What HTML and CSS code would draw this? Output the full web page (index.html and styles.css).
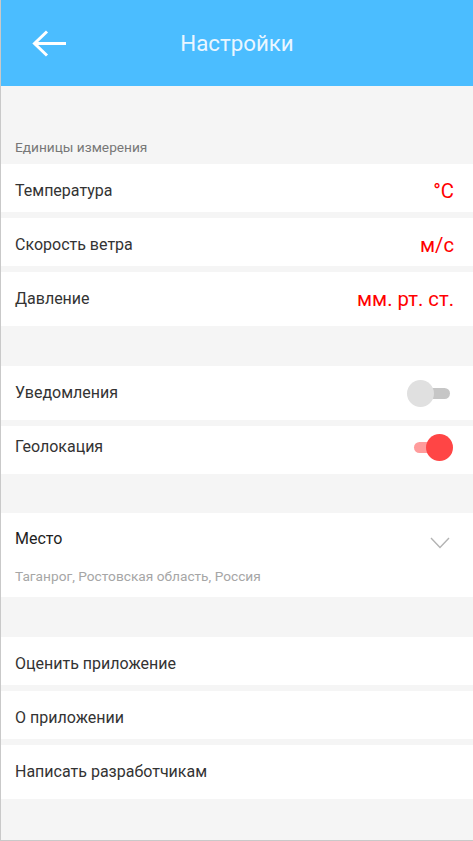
FILE: index.html
```html
<!DOCTYPE html>
<html lang="ru">
<head>
<meta charset="utf-8">
<title>Настройки</title>
<link rel="stylesheet" href="styles.css">
</head>
<body>
<div class="screen">
  <header class="appbar">
    <div class="appbar__back">
      <svg width="34" height="27" viewBox="0 0 34 27" aria-hidden="true">
        <path d="M2.5 13.5 H34 M15 1.5 L2.5 13.5 L15 25.5" fill="none" stroke="#fff" stroke-width="3"/>
      </svg>
    </div>
    <h1 class="appbar__title">Настройки</h1>
    <div></div>
  </header>

  <div class="section-label">Единицы измерения</div>
  <div class="group">
    <div class="row"><span class="row__label">Температура</span><span class="row__value">°C</span></div>
    <div class="row"><span class="row__label">Скорость ветра</span><span class="row__value">м/с</span></div>
    <div class="row row--tall"><span class="row__label">Давление</span><span class="row__value">мм. рт. ст.</span></div>
  </div>

  <div class="spacer"></div>
  <div class="group">
    <div class="row row--tall"><span class="row__label">Уведомления</span><span class="switch"><span class="switch__track"></span><span class="switch__thumb"></span></span></div>
    <div class="row row--raised"><span class="row__label">Геолокация</span><span class="switch switch--on"><span class="switch__track"></span><span class="switch__thumb"></span></span></div>
  </div>

  <div class="spacer spacer--short"></div>
  <div class="place">
    <div class="place__head">
      <span class="row__label row__label--dark">Место</span>
      <svg class="place__chevron" width="20" height="12" viewBox="0 0 20 12" aria-hidden="true">
        <polyline points="1,1 10,10.5 19,1" fill="none" stroke="#b3b3b3" stroke-width="1.4"/>
      </svg>
    </div>
    <div class="place__sub">Таганрог, Ростовская область, Россия</div>
  </div>

  <div class="spacer"></div>
  <div class="group">
    <div class="row"><span class="row__label">Оценить приложение</span></div>
    <div class="row"><span class="row__label">О приложении</span></div>
    <div class="row row--tall"><span class="row__label">Написать разработчикам</span></div>
  </div>
</div>
</body>
</html>
```

FILE: styles.css
```css
* { box-sizing: border-box; }
html, body { margin: 0; padding: 0; }
body {
  font-family: Roboto, "Noto Sans", "DejaVu Sans", sans-serif;
  background: #f5f5f5;
}
.screen {
  width: 473px;
  height: 841px;
  background: #f5f5f5;
  border-left: 1px solid #c9c9c9;
  border-bottom: 1px solid #c9c9c9;
  overflow: hidden;
}
.appbar {
  height: 86px;
  background: #4bbdff;
  display: grid;
  grid-template-columns: 1fr auto 1fr;
  align-items: center;
}
.appbar__back {
  padding-left: 31px;
  display: flex;
  align-items: center;
  height: 27px;
}
.appbar__back svg { display: block; }
.appbar__title {
  margin: 0;
  font-weight: 400;
  font-size: 22.3px;
  line-height: 26px;
  color: #eaf6ff;
}
.section-label {
  height: 78px;
  padding: 53px 0 0 14px;
  font-size: 13.7px;
  line-height: 16px;
  color: #777;
}
.group {
  display: flex;
  flex-direction: column;
  gap: 6px;
}
.row {
  height: 48px;
  background: #fff;
  padding: 17px 19px 11px 14px;
  display: flex;
  align-items: center;
  justify-content: space-between;
}
.row--tall {
  height: 54px;
  padding-bottom: 17px;
}
.row--raised {
  padding-top: 11px;
  padding-bottom: 17px;
}
.row__label {
  font-size: 16px;
  line-height: 20px;
  color: #333;
}
.row__label--dark { color: #1e1e1e; }
.row__value {
  font-size: 20.3px;
  line-height: 20px;
  color: #ff0000;
}
.spacer { height: 40px; }
.spacer--short { height: 39px; }

.switch {
  position: relative;
  width: 46px;
  height: 27px;
  margin-right: 1px;
  flex: none;
}
.switch__track {
  position: absolute;
  left: 7px;
  top: 8px;
  width: 36px;
  height: 11px;
  border-radius: 6px;
  background: #c6c6c6;
}
.switch__thumb {
  position: absolute;
  left: 0;
  top: 0;
  width: 27px;
  height: 27px;
  border-radius: 50%;
  background: #e0e0e0;
}
.switch--on .switch__track { background: #ff9c9c; }
.switch--on .switch__thumb { left: 19px; background: #ff4545; }

.place {
  height: 84px;
  background: #fff;
  padding: 16px 23px 0 14px;
}
.place__head {
  display: flex;
  align-items: center;
  justify-content: space-between;
  height: 20px;
}
.place__chevron { display: block; margin-top: 7px; }
.place__sub {
  margin-top: 19px;
  font-size: 13.7px;
  line-height: 16px;
  color: #a6a6a6;
}
```
